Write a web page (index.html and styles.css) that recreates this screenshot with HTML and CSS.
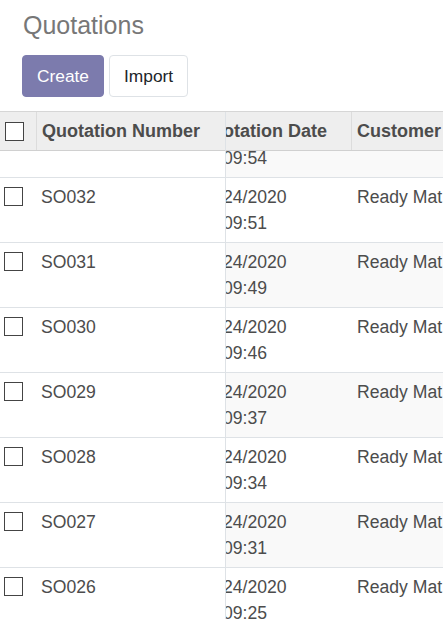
FILE: index.html
```html
<!DOCTYPE html>
<html>
<head>
<meta charset="utf-8">
<link rel="stylesheet" href="styles.css">
</head>
<body>
<div class="page">
  <div class="control-panel">
    <h1 class="title">Quotations</h1>
    <div class="buttons">
      <button class="btn btn-primary">Create</button>
      <button class="btn">Import</button>
    </div>
  </div>
  <div class="list">
    <div class="pane frozen">
      <div class="head">
        <div class="cell check"><span class="box"></span></div>
        <div class="cell name">Quotation Number</div>
      </div>
      <div class="body">
        <div class="rows">
          <div class="row"><div class="cell check"><span class="box"></span></div><div class="cell name">SO033</div></div>
          <div class="row"><div class="cell check"><span class="box"></span></div><div class="cell name">SO032</div></div>
          <div class="row"><div class="cell check"><span class="box"></span></div><div class="cell name">SO031</div></div>
          <div class="row"><div class="cell check"><span class="box"></span></div><div class="cell name">SO030</div></div>
          <div class="row"><div class="cell check"><span class="box"></span></div><div class="cell name">SO029</div></div>
          <div class="row"><div class="cell check"><span class="box"></span></div><div class="cell name">SO028</div></div>
          <div class="row"><div class="cell check"><span class="box"></span></div><div class="cell name">SO027</div></div>
          <div class="row"><div class="cell check"><span class="box"></span></div><div class="cell name">SO026</div></div>
        </div>
      </div>
    </div>
    <div class="pane scroll">
      <div class="head">
        <div class="cell date-head"><span class="clip-head">Quotation Date</span></div>
        <div class="cell customer">Customer</div>
      </div>
      <div class="body">
        <div class="rows">
          <div class="row striped"><div class="cell date"><span>24/2020</span><span>09:54</span></div><div class="cell customer">Ready Mat</div></div>
          <div class="row"><div class="cell date"><span>24/2020</span><span>09:51</span></div><div class="cell customer">Ready Mat</div></div>
          <div class="row striped"><div class="cell date"><span>24/2020</span><span>09:49</span></div><div class="cell customer">Ready Mat</div></div>
          <div class="row"><div class="cell date"><span>24/2020</span><span>09:46</span></div><div class="cell customer">Ready Mat</div></div>
          <div class="row striped"><div class="cell date"><span>24/2020</span><span>09:37</span></div><div class="cell customer">Ready Mat</div></div>
          <div class="row"><div class="cell date"><span>24/2020</span><span>09:34</span></div><div class="cell customer">Ready Mat</div></div>
          <div class="row striped"><div class="cell date"><span>24/2020</span><span>09:31</span></div><div class="cell customer">Ready Mat</div></div>
          <div class="row"><div class="cell date"><span>24/2020</span><span>09:25</span></div><div class="cell customer">Ready Mat</div></div>
        </div>
      </div>
    </div>
  </div>
</div>
</body>
</html>
```
FILE: styles.css
```css
* { box-sizing: border-box; }
html, body {
  margin: 0;
  width: 443px;
  height: 619px;
  overflow: hidden;
  background: #fff;
}
body {
  font-family: "Liberation Sans", Arial, sans-serif;
  color: #4c4c4c;
  font-size: 17.6px;
}
.page {
  height: 619px;
  display: flex;
  flex-direction: column;
}
.control-panel {
  padding: 11px 0 14px 22px;
}
.title {
  margin: 0 0 0 1px;
  font-size: 25px;
  line-height: 29px;
  font-weight: normal;
  color: #777;
}
.buttons {
  display: flex;
  gap: 5px;
  margin-top: 15px;
}
.btn {
  height: 42px;
  padding: 0 14px;
  border: 1px solid #dee2e6;
  border-radius: 4px;
  background: #fff;
  font-family: inherit;
  font-size: 17.33px;
  color: #212529;
}
.btn-primary {
  background: #7c7bad;
  border-color: #7c7bad;
  color: #fff;
}
.list {
  flex: 1;
  min-height: 0;
  display: flex;
  border-top: 1px solid #d6d6d6;
}
.pane {
  display: flex;
  flex-direction: column;
  min-height: 0;
}
.frozen {
  flex: none;
  width: 226px;
  border-right: 1px solid #dee2e6;
}
.scroll {
  flex: 1;
  min-width: 0;
  overflow: hidden;
  white-space: nowrap;
}
.head {
  flex: none;
  height: 39px;
  display: flex;
  align-items: stretch;
  background: #eee;
  border-bottom: 1px solid #d0d0d0;
  font-weight: bold;
  font-size: 18px;
  color: #4c4c4c;
}
.head .cell {
  display: flex;
  align-items: center;
}
.body {
  flex: 1;
  min-height: 0;
  overflow: hidden;
}
.rows {
  margin-top: -38px;
}
.row {
  display: flex;
  height: 65px;
  border-bottom: 1px solid #dee2e6;
  line-height: 26px;
}
.row .cell {
  padding-top: 6px;
}
.striped {
  background: #f9f9f9;
}
.check {
  flex: none;
  width: 36px;
  padding-left: 4px;
}
.head .check {
  width: 37px;
  padding-left: 5px;
  border-right: 1px solid #dcdcdc;
}
.box {
  display: block;
  width: 19px;
  height: 19px;
  border: 1px solid #444;
  background: #fff;
}
.row .box {
  margin-top: 3px;
}
.name {
  padding-left: 5px;
}
.date-head {
  flex: none;
  width: 126px;
  border-right: 1px solid #dcdcdc;
  overflow: hidden;
}
.clip-head {
  margin-left: -28px;
}
.date {
  flex: none;
  width: 126px;
  display: flex;
  flex-direction: column;
}
.date span {
  display: block;
  margin-left: -3px;
}
.customer {
  padding-left: 5px;
}
```
